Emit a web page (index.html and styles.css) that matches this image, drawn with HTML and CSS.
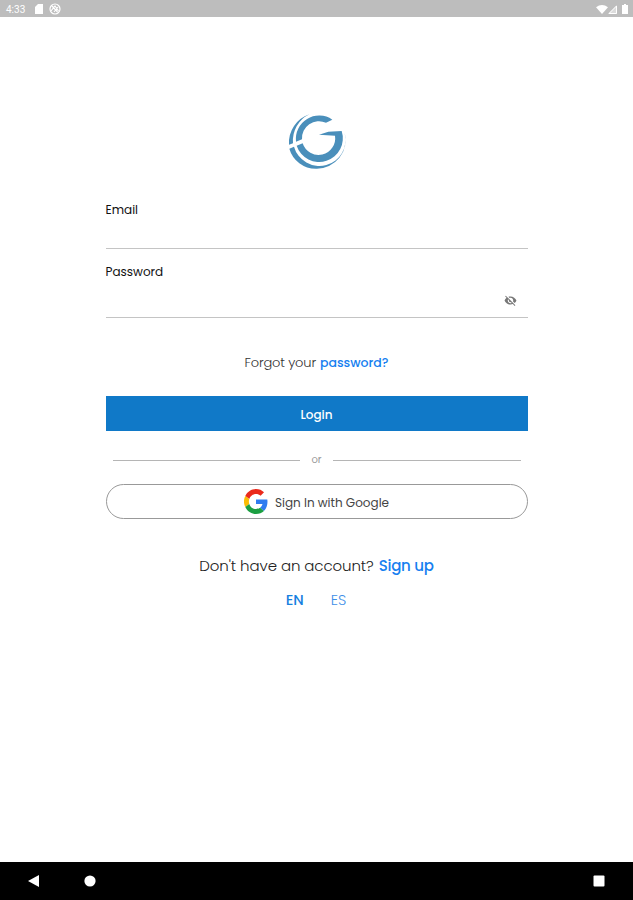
FILE: index.html
```
<!DOCTYPE html>
<html lang="en">
<head>
    <meta charset="utf-8">
    <meta name="viewport" content="width=device-width, initial-scale=1">
    <title>Login</title>
    <link rel="stylesheet" href="styles.css">
</head>
<body>
<header class="status-bar">
    <span class="time">4:33</span>
    <svg class="sd" width="8" height="10" viewBox="0 0 8 10"><path fill="#fff" d="M3 0h5v10H0V3z"/></svg>
    <svg class="app" width="12" height="12" viewBox="0 0 12 12" fill="none" stroke="#fff" stroke-width="1.2"><circle cx="6" cy="6" r="5"/><path d="M2 8l4-5 3.5 5M3 3l5.5 6M5 9l4-5"/></svg>
    <span class="signals">
        <svg width="12" height="9" viewBox="0 0 12 9"><path fill="#fff" d="M0 2.2Q6-2 12 2.2L6 9z"/></svg>
        <svg width="9" height="9" viewBox="0 0 9 9"><path fill="#fff" fill-opacity=".45" d="M9 0v9H0z"/><path fill="none" stroke="#fff" d="M8.5 1v7.5H1z"/></svg>
        <svg class="battery" width="6" height="10" viewBox="0 0 6 10"><path fill="#fff" d="M2 0h2v1h2v9H0V1h2z"/></svg>
    </span>
</header>
<main class="login">
    <svg class="logo" width="80" height="76" viewBox="0 0 240 228" fill="#4a8fbb">
        <path d="M97 37A90 90 0 0 0 36 128L48 124A88 88 0 0 1 97 37z"/>
        <path d="M37 140A83 83 0 0 0 117 200A86 86 0 0 0 203 92A78 78 0 0 1 51 134z"/>
        <path d="M166 53A70 70 0 0 0 57 119L75 112A51 51 0 0 1 147 62z"/>
        <path d="M59 131A70 70 0 0 0 194 87L154 89L126 98L174 101A50 50 0 0 1 77 124z"/>
    </svg>
    <form class="form">
        <label class="field email">
            <span>Email</span>
        </label>
        <label class="field password">
            <span>Password</span>
            <svg class="eye" width="13" height="13" viewBox="0 0 24 24"><path fill="#777" d="M12 7c2.76 0 5 2.24 5 5 0 .65-.13 1.26-.36 1.83l2.92 2.92c1.51-1.26 2.7-2.89 3.43-4.75-1.73-4.39-6-7.5-11-7.5-1.4 0-2.74.25-3.98.7l2.16 2.16C10.74 7.13 11.35 7 12 7zM2 4.27l2.28 2.28.46.46C3.08 8.3 1.78 10.02 1 12c1.73 4.39 6 7.5 11 7.5 1.55 0 3.03-.3 4.38-.84l.42.42L19.73 22 21 20.73 3.27 3zM7.53 9.8l1.55 1.55c-.05.21-.08.43-.08.65 0 1.66 1.34 3 3 3 .22 0 .44-.03.65-.08l1.55 1.55c-.67.33-1.41.53-2.2.53-2.76 0-5-2.24-5-5 0-.79.2-1.53.53-2.2z"/></svg>
        </label>
        <p class="forgot"><span>Forgot your</span> <a>password?</a></p>
        <button class="submit" type="button">Login</button>
        <div class="divider"><span>or</span></div>
        <button class="google" type="button">
            <svg width="24" height="25" viewBox="0 0 48 48" preserveAspectRatio="none"><path fill="#ea2a1c" d="M24 9.5c3.54 0 6.71 1.22 9.21 3.6l6.85-6.85C35.9 2.38 30.47 0 24 0 14.62 0 6.51 5.38 2.56 13.22l7.98 6.19C12.43 13.72 17.74 9.5 24 9.5z"/><path fill="#2f7cf0" d="M46.98 24.55c0-1.57-.15-3.09-.38-4.55H24v9.02h12.94c-.58 2.96-2.26 5.48-4.78 7.18l7.73 6c4.51-4.18 7.09-10.36 7.09-17.65z"/><path fill="#fbbc05" d="M10.53 28.59a14.5 14.5 0 0 1 0-9.18l-7.98-6.19a24 24 0 0 0 0 21.56z"/><path fill="#1c9f42" d="M24 48c6.48 0 11.93-2.13 15.89-5.81l-7.73-6c-2.15 1.45-4.92 2.3-8.16 2.3-6.26 0-11.57-4.22-13.47-9.91l-7.98 6.19C6.51 42.62 14.62 48 24 48z"/></svg>
            <span>Sign In with Google</span>
        </button>
    </form>
    <p class="signup"><span>Don't have an account?</span> <a>Sign up</a></p>
    <div class="languages"><a class="active">EN</a><a>ES</a></div>
</main>
<nav class="nav-bar">
    <svg width="12" height="14" viewBox="0 0 12 14"><path fill="#fff" d="M11 1v12L0 7z"/></svg>
    <svg class="home" width="12" height="12" viewBox="0 0 12 12"><circle fill="#fff" cx="6" cy="6" r="5.6"/></svg>
    <svg class="recent" width="12" height="12" viewBox="0 0 12 12"><rect fill="#fff" x=".5" y=".5" width="11" height="11" rx="1"/></svg>
</nav>
</body>
</html>
```
FILE: styles.css
```
* {
    box-sizing: border-box;
    margin: 0;
    padding: 0;
}
body {
    display: flex;
    flex-direction: column;
    height: 900px;
    background: #fff;
    color: #222;
    font-family: Poppins, Inter, sans-serif;
}
a {
    color: #1680f0;
    font-weight: 500;
}
button {
    font-family: inherit;
}
/* status bar */
.status-bar {
    display: flex;
    align-items: center;
    height: 17px;
    padding: 1px 5px 0 6px;
    background: #bdbdbd;
    color: #fff;
}
.time {
    width: 20px;
    font-family: Roboto, sans-serif;
    font-size: 10px;
}
.sd {margin-left: 9px;}
.app {margin-left: 6px;}
.signals {
    display: flex;
    align-items: center;
    margin-left: auto;
}
.battery {margin-left: 5px;}
/* login form */
.login {
    flex: 1;
    display: flex;
    flex-direction: column;
    align-items: center;
    padding-top: 85px;
}
.logo {display: block;}
.form {
    width: 422px;
    margin-top: 22px;
}
.field {
    display: flex;
    position: relative;
    border-bottom: 1px solid #c4c4c4;
    color: #111;
    font-size: 12px;
    line-height: 20px;
}
.email {
    height: 49px;
}
.password {
    height: 69px;
    padding-top: 13px;
}
.eye {
    position: absolute;
    right: 11px;
    bottom: 10px;
}
.forgot {
    display: flex;
    justify-content: center;
    gap: 4px;
    margin-top: 35px;
    color: #333;
    font-size: 13px;
    line-height: 20px;
    letter-spacing: -0.15px;
}
.forgot a {
    font-size: 12.5px;
    letter-spacing: 0;
}
.submit {
    display: block;
    width: 100%;
    height: 35px;
    margin-top: 23px;
    padding-top: 2px;
    border: 0;
    background: #1079c8;
    color: #fff;
    font-size: 12px;
    font-weight: 500;
}
.divider {
    display: flex;
    align-items: center;
    gap: 11px;
    height: 16px;
    margin: 21px 7px 16px;
    color: #999;
    font-size: 10px;
}
.divider::before,
.divider::after {
    flex: 1;
    height: 1px;
    background: #b5b5b5;
    content: "";
}
.google {
    display: flex;
    align-items: center;
    justify-content: center;
    gap: 7px;
    width: 100%;
    height: 35px;
    border: 1px solid #999;
    border-radius: 18px;
    background: #fff;
    color: #444;
    font-size: 12px;
}
.google span {padding-top: 2px;}
.signup {
    display: flex;
    gap: 5px;
    margin-top: 35px;
    color: #222;
    font-size: 15px;
    line-height: 24px;
    letter-spacing: -0.1px;
}
.signup a {letter-spacing: -0.25px;}
.forgot span,
.signup span {
    font-weight: 300;
}
.languages {
    display: flex;
    gap: 27px;
    margin-top: 10px;
    padding-right: 1px;
    font-size: 14.5px;
    line-height: 24px;
}
.languages a {
    color: #3d8ee8;
    font-weight: 300;
}
.languages .active {
    color: #1680e0;
    font-weight: 500;
}
/* android navigation */
.nav-bar {
    display: flex;
    align-items: center;
    height: 38px;
    padding: 0 28px;
    background: #000;
}
.home {margin-left: 44px;}
.recent {margin-left: auto;}
```
